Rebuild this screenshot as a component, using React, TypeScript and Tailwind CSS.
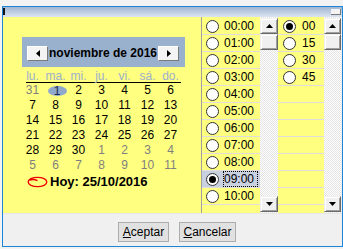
import React from "react";

const weekDays = ["lu.", "ma.", "mi.", "ju.", "vi.", "sá.", "do."];

const weeks: { d: number; other?: boolean; today?: boolean }[][] = [
	[{ d: 31, other: true }, { d: 1, today: true }, { d: 2 }, { d: 3 }, { d: 4 }, { d: 5 }, { d: 6 }],
	[7, 8, 9, 10, 11, 12, 13].map((d) => ({ d })),
	[14, 15, 16, 17, 18, 19, 20].map((d) => ({ d })),
	[21, 22, 23, 24, 25, 26, 27].map((d) => ({ d })),
	[{ d: 28 }, { d: 29 }, { d: 30 }, { d: 1, other: true }, { d: 2, other: true }, { d: 3, other: true }, { d: 4, other: true }],
	[5, 6, 7, 8, 9, 10, 11].map((d) => ({ d, other: true })),
];

const hours = ["00:00", "01:00", "02:00", "03:00", "04:00", "05:00", "06:00", "07:00", "08:00", "09:00", "10:00", ""];
const minutes = ["00", "15", "30", "45", "", "", "", "", "", "", "", ""];

function Radio({ checked }: { checked?: boolean }) {
	return (
		<span className="w-[13px] h-[13px] rounded-full border border-[#333333] bg-white flex items-center justify-center shrink-0">
			{checked && <span className="w-[7px] h-[7px] rounded-full bg-black" />}
		</span>
	);
}

function ListRow({
	label,
	checked,
	focused,
	radioCell,
}: {
	label: string;
	checked?: boolean;
	focused?: boolean;
	radioCell: "hour" | "min";
}) {
	return (
		<div
			className={`h-[17px] shrink-0 border-b border-[#dedede] flex items-center ${
				focused ? "bg-[#c9d1e0]" : ""
			}`}>
			{label !== "" && (
				<>
					<div className={`${radioCell === "hour" ? "w-[21px]" : "w-[23px]"} flex justify-center`}>
						<Radio checked={checked} />
					</div>
					<span
						className={`h-[16px] leading-[14px] text-[12px] pr-[3px] border ${
							focused ? "border-dotted border-black" : "border-transparent"
						}`}>
						{label}
					</span>
				</>
			)}
		</div>
	);
}

function ScrollButton({ children }: { children?: React.ReactNode }) {
	return (
		<div className="h-[16px] shrink-0 bg-[#f0f0f0] border border-t-[#f0f0f0] border-l-[#f0f0f0] border-r-[#696969] border-b-[#696969] shadow-[inset_1px_1px_0_#ffffff,inset_-1px_-1px_0_#a0a0a0] flex items-center justify-center">
			{children}
		</div>
	);
}

function ScrollBar() {
	return (
		<div className="h-full flex flex-col py-[1px] bg-[image:repeating-conic-gradient(#e4e4e4_0%_25%,#ffffff_0%_50%)] bg-[length:2px_2px]">
			<ScrollButton>
				<svg width="7" height="4" viewBox="0 0 7 4">
					<polygon points="0,4 7,4 3.5,0" fill="#000" />
				</svg>
			</ScrollButton>
			<ScrollButton />
			<div className="flex-1" />
			<ScrollButton>
				<svg width="7" height="4" viewBox="0 0 7 4">
					<polygon points="0,0 7,0 3.5,4" fill="#000" />
				</svg>
			</ScrollButton>
		</div>
	);
}

function NavButton({ dir }: { dir: "left" | "right" }) {
	return (
		<div className="w-[21px] h-[15px] shrink-0 bg-[#f4f4f4] border border-t-white border-l-white border-r-[#7a7a7a] border-b-[#7a7a7a] flex items-center justify-center">
			<svg width="4" height="7" viewBox="0 0 4 7">
				<polygon points={dir === "left" ? "4,0 4,7 0,3.5" : "0,0 0,7 4,3.5"} fill="#000" />
			</svg>
		</div>
	);
}

function Calendar() {
	return (
		<div className="w-[198px] h-full bg-[#ffff80] pt-[20px] pl-[18px]">
			<div className="ml-[1px] w-[163px] h-[30px] bg-[#9ab1ce] pt-[9px] pl-[5px] pr-[6px]">
				<div className="flex items-center h-[15px]">
					<NavButton dir="left" />
					<div className="flex-1 text-center text-[12px] leading-[15px] font-bold text-black whitespace-nowrap">
						noviembre de 2016
					</div>
					<NavButton dir="right" />
				</div>
			</div>

			<div className="w-[161px] mt-[3px]">
				<div className="flex h-[12px]">
					{weekDays.map((w) => (
						<div key={w} className="w-[23px] text-center text-[12px] leading-[12px] text-[#9db0cc]">
							{w}
						</div>
					))}
				</div>
				<div className="ml-[5px] w-[155px] h-[1px] bg-black" />
				{weeks.map((week, i) => (
					<div key={i} className="flex h-[15px]">
						{week.map((day, j) => (
							<div
								key={j}
								className={`w-[23px] flex items-center justify-center text-[12px] leading-[15px] ${
									day.other ? "text-[#7f7f7f]" : "text-black"
								}`}>
								{day.today ? (
									<span className="ml-[3px] w-[19px] h-[10px] rounded-[50%] bg-[#8fa8cc] text-[#1f2d50] leading-[10px] text-center">
										{day.d}
									</span>
								) : (
									day.d
								)}
							</div>
						))}
					</div>
				))}
			</div>

			<div className="flex items-center h-[16px] mt-[1px] ml-[6px]">
				<svg width="21" height="12" viewBox="0 0 21 12" className="shrink-0">
					<ellipse cx="10.5" cy="6" rx="9.3" ry="4.6" fill="none" stroke="#ee0000" strokeWidth="1.4" />
					<path d="M2.5 4.2 C5 3.2 8 3.4 10.5 4.6" fill="none" stroke="#ee0000" strokeWidth="1.3" />
				</svg>
				<span className="ml-[2px] text-[13px] leading-[16px] font-bold text-black whitespace-nowrap">
					Hoy: 25/10/2016
				</span>
			</div>
		</div>
	);
}

export default function App() {
	return (
		<div className="w-[343px] h-[249px] overflow-hidden bg-[#f3f3f3] pt-[6px] pl-[2px] font-['Liberation_Sans',Arial,sans-serif] text-black">
			<div className="w-[341px] h-[241px] border border-[#1e84d6] bg-[#f0f0f0] flex flex-col">
				{/* header strip */}
				<div className="h-[10px] shrink-0 bg-linear-to-b from-[#a2b6d3] to-[#dce4f0] flex">
					<div className="w-[2px] h-[7px] mt-[1px] bg-[#111111]" />
					<div className="ml-auto mr-[1px] mt-[2px] w-[10px] h-[6px] bg-[#f4f4f4] border-r border-b border-[#7a7a7a]" />
				</div>

				{/* main area */}
				<div className="h-[196px] shrink-0 flex">
					<Calendar />
					<div className="w-[1px] h-full bg-[#a0a0a0]" />
					<div className="w-[58px] h-full bg-[#ffff80] pt-[1px] overflow-hidden flex flex-col">
						{hours.map((h, i) => (
							<ListRow key={i} label={h} checked={i === 9} focused={i === 9} radioCell="hour" />
						))}
					</div>
					<div className="w-[18px] h-full">
						<ScrollBar />
					</div>
					<div className="w-[46px] h-full bg-[#ffff80] pt-[1px] overflow-hidden flex flex-col">
						{minutes.map((m, i) => (
							<ListRow key={i} label={m} checked={i === 0} radioCell="min" />
						))}
					</div>
					<div className="w-[17px] h-full">
						<ScrollBar />
					</div>
				</div>

				{/* buttons */}
				<div className="flex-1 border-t border-[#e6e6e6] pt-[8px] pl-[115px] flex gap-[10px]">
					<button className="w-[51px] h-[20px] border border-[#adadad] bg-[#e1e1e1] text-[12px] leading-[18px] text-black">
						<span className="underline">A</span>ceptar
					</button>
					<button className="w-[57px] h-[20px] border border-[#adadad] bg-[#e1e1e1] text-[12px] leading-[18px] text-black">
						<span className="underline">C</span>ancelar
					</button>
				</div>
			</div>
		</div>
	);
}
